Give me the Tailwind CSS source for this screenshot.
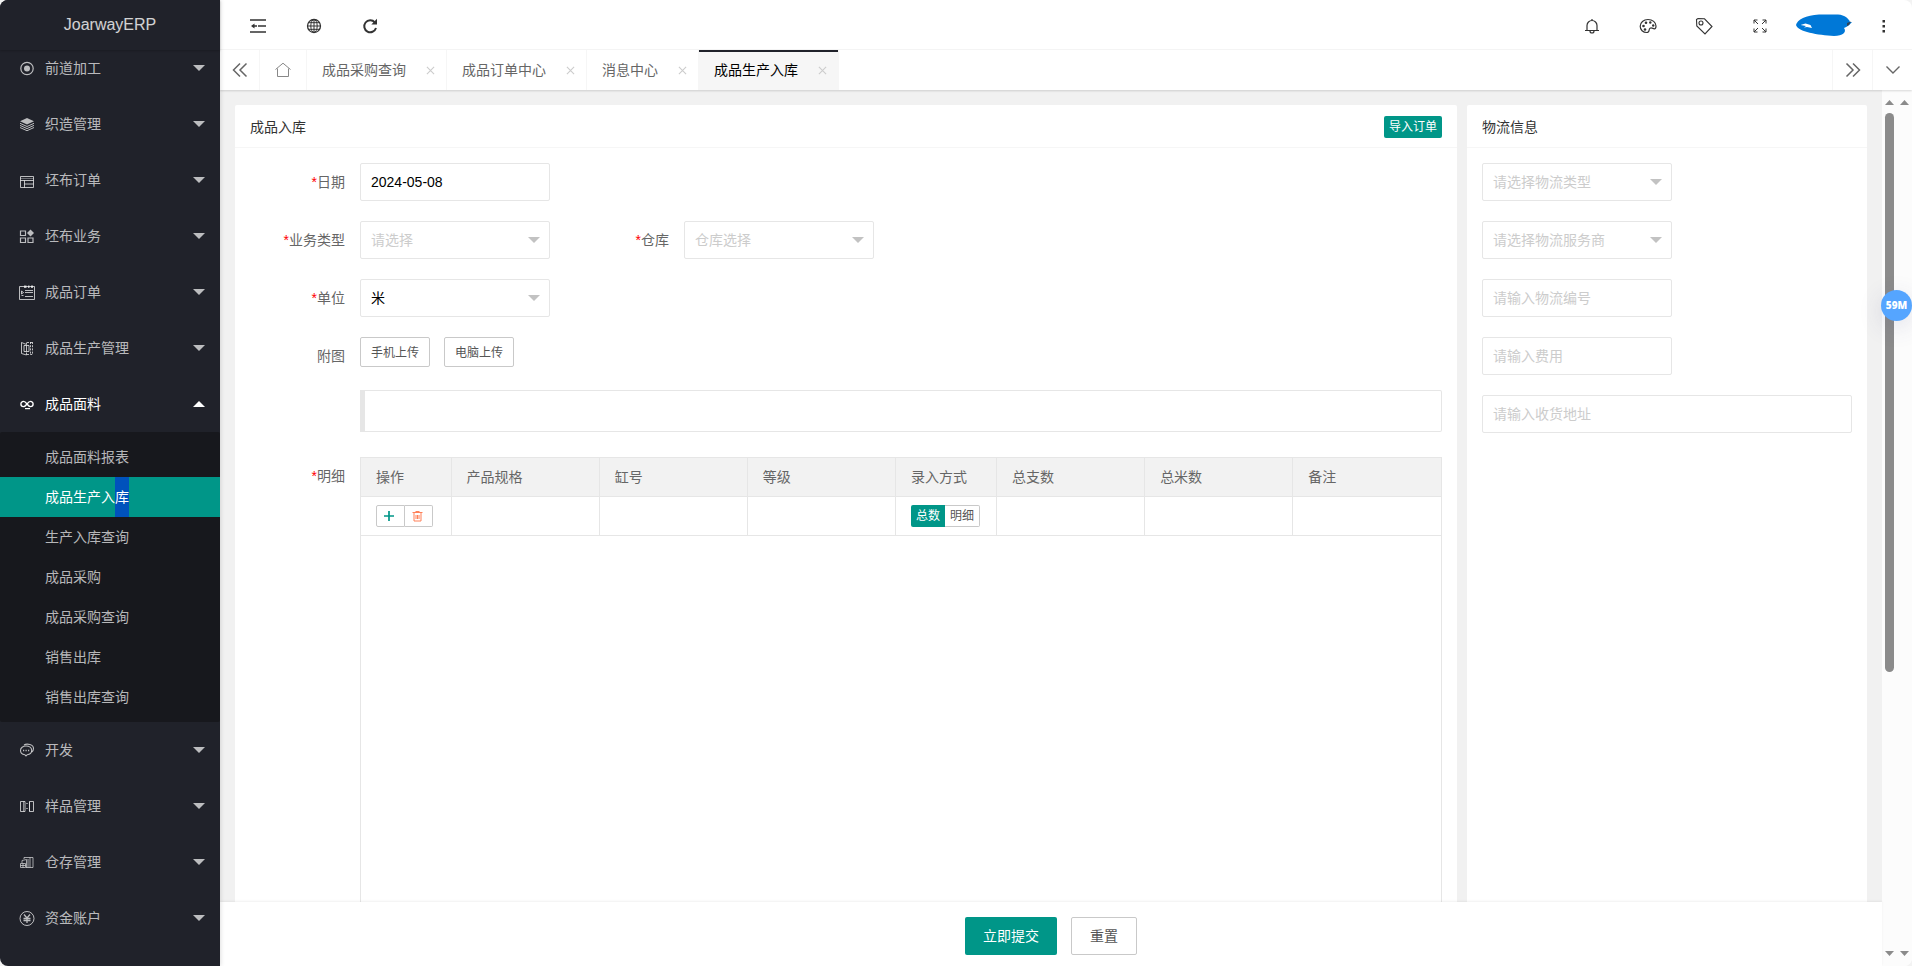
<!DOCTYPE html>
<html lang="zh-CN">
<head>
<meta charset="utf-8">
<meta name="viewport" content="width=device-width, initial-scale=1">
<title>JoarwayERP</title>
<script src="https://cdn.jsdelivr.net/npm/@tailwindcss/browser@4"></script>
</head>
<body class="h-screen overflow-hidden bg-[#f3f3f3] text-sm text-[#666] font-['Liberation_Sans','Noto_Sans_CJK_SC',sans-serif]">
<svg class="hidden" aria-hidden="true">
  <symbol id="down" viewBox="0 0 12 6"><path d="M0 0h12L6 6z" fill="currentColor"/></symbol>
  <symbol id="up" viewBox="0 0 12 6"><path d="M0 6h12L6 0z" fill="currentColor"/></symbol>
  <symbol id="close" viewBox="0 0 10 10"><path d="M1 1l8 8M9 1L1 9" fill="none" stroke="currentColor" stroke-width="1.2"/></symbol>
</svg>
<div class="flex h-full overflow-hidden rounded-lg bg-white">

  <!-- Sidebar -->
  <aside class="relative z-20 flex w-[220px] shrink-0 flex-col bg-[#20222a] text-white/70 shadow-[1px_0_4px_rgba(0,0,0,0.12)]">
    <div class="z-10 flex h-[50px] shrink-0 items-center justify-center bg-[#20222a] text-base text-white/80 shadow-[0_1px_2px_rgba(0,0,0,0.2)]">JoarwayERP</div>
    <nav class="-mt-2.5 min-h-0 flex-1 overflow-hidden">
      <ul>
        <li><a href="#" class="flex h-14 items-center pr-[15px] pl-[19px]">
          <svg class="mr-[10px] size-4" viewBox="0 0 16 16" fill="none" stroke="currentColor" stroke-width="1.2"><circle cx="8" cy="8.5" r="6.2"/><circle cx="8" cy="8.5" r="3" fill="currentColor" stroke="none"/></svg>
          <span class="flex-1">前道加工</span><svg class="h-1.5 w-3"><use href="#down"/></svg></a></li>
        <li><a href="#" class="flex h-14 items-center pr-[15px] pl-[19px]">
          <svg class="mr-[10px] size-4" viewBox="0 0 16 16" fill="none" stroke="currentColor"><path d="M8 2l7 3.2-7 3.2-7-3.2z" fill="currentColor" stroke="none"/><path d="M1 7.300l7 3.200 7-3.200M1 9.400l7 3.200 7-3.200M1 11.500l7 3.200 7-3.200"/></svg>
          <span class="flex-1">织造管理</span><svg class="h-1.5 w-3"><use href="#down"/></svg></a></li>
        <li><a href="#" class="flex h-14 items-center pr-[15px] pl-[19px]">
          <svg class="mr-[10px] size-4" viewBox="0 0 16 16" fill="none" stroke="currentColor"><path d="M1.500 4.500h13v11h-13zM1.500 8.500h13M5.500 8.500v7M5.500 12h9"/><path d="M1.500 6.500h13" opacity=".5"/></svg>
          <span class="flex-1">坯布订单</span><svg class="h-1.5 w-3"><use href="#down"/></svg></a></li>
        <li><a href="#" class="flex h-14 items-center pr-[15px] pl-[19px]">
          <svg class="mr-[10px] size-4" viewBox="0 0 16 16" fill="none" stroke="currentColor" stroke-width="1.2"><path d="M1.500 3h5v4.500h-5zM1.500 10h5v4.500h-5zM9 10h5v4.500H9z"/><path d="M11.500 1.500L15 5l-3.500 3.500L8 5z" fill="currentColor" stroke="none"/></svg>
          <span class="flex-1">坯布业务</span><svg class="h-1.5 w-3"><use href="#down"/></svg></a></li>
        <li><a href="#" class="flex h-14 items-center pr-[15px] pl-[19px]">
          <svg class="mr-[10px] size-4" viewBox="0 0 16 16" fill="none" stroke="currentColor"><path d="M.5 2.500h15v13H.5z"/><path d="M5 1.500h2.500V4H5zM9 1.500h1.500V4H9zM12 1.500h2V4h-2z" fill="currentColor" stroke="none"/><path d="M2.500 7v3l2-1.500zM6 6.500h8M6 8.500h8M2.500 11.500h2M6 12.500h8"/></svg>
          <span class="flex-1">成品订单</span><svg class="h-1.5 w-3"><use href="#down"/></svg></a></li>
        <li><a href="#" class="flex h-14 items-center pr-[15px] pl-[19px]">
          <svg class="mr-[10px] size-4" viewBox="0 0 16 16" fill="none" stroke="currentColor"><path d="M2.500 2.500v11l5 1.500v-2.500M2.500 2.500L7.500 4.500v-2M5 5.500h5v6H5zM7.500 5.500v6"/><path d="M8 2.500h6M8 14.500h6M11.500 2v12M13.500 2v12" stroke-dasharray="2 1.200"/></svg>
          <span class="flex-1">成品生产管理</span><svg class="h-1.5 w-3"><use href="#down"/></svg></a></li>
        <li class="text-white"><a href="#" class="flex h-14 items-center pr-[15px] pl-[19px]">
          <svg class="mr-[10px] size-4" viewBox="0 0 16 16" fill="none" stroke="currentColor" stroke-width="1.400"><path d="M8 8C6.800 6.400 5.900 5.400 4.500 5.400a2.600 2.600 0 0 0 0 5.200C5.900 10.600 6.800 9.600 8 8S10.100 5.400 11.500 5.400a2.600 2.600 0 0 1 0 5.200C10.100 10.600 9.200 9.600 8 8z"/><path d="M6 12.600h5" stroke-width="1.200"/></svg>
          <span class="flex-1">成品面料</span><svg class="h-1.5 w-3"><use href="#up"/></svg></a>
          <ul class="rounded-xs bg-[#17181d] py-[5px] text-white/70">
            <li><a href="#" class="block h-10 pl-[45px] leading-10">成品面料报表</a></li>
            <li><a href="#" class="flex h-10 bg-[#009688] pl-[45px] leading-10 text-white">成品生产入<span class="bg-[#0052bc]">库</span></a></li>
            <li><a href="#" class="block h-10 pl-[45px] leading-10">生产入库查询</a></li>
            <li><a href="#" class="block h-10 pl-[45px] leading-10">成品采购</a></li>
            <li><a href="#" class="block h-10 pl-[45px] leading-10">成品采购查询</a></li>
            <li><a href="#" class="block h-10 pl-[45px] leading-10">销售出库</a></li>
            <li><a href="#" class="block h-10 pl-[45px] leading-10">销售出库查询</a></li>
          </ul></li>
        <li><a href="#" class="flex h-14 items-center pr-[15px] pl-[19px]">
          <svg class="mr-[10px] size-4" viewBox="0 0 16 16" fill="none" stroke="currentColor" stroke-width="1.100"><path d="M7 4c3.200 0 5.700 1.900 5.700 4.400 0 2.200-2 3.900-4.500 4.300L7 14l-1.200-1.300C3.300 12.300 1.500 10.600 1.500 8.400 1.500 5.900 4 4 7 4z"/><path d="M5 3c3-1.800 9.500-.5 9.500 3.500 0 1.800-.7 2.800-1.800 3.500"/><path d="M4 8.500h1.200M6.500 8.500h1.200M9 8.500h1.200" stroke-width="1.500"/></svg>
          <span class="flex-1">开发</span><svg class="h-1.5 w-3"><use href="#down"/></svg></a></li>
        <li><a href="#" class="flex h-14 items-center pr-[15px] pl-[19px]">
          <svg class="mr-[10px] size-4" viewBox="0 0 16 16" fill="none" stroke="currentColor"><path d="M1.500 3.500H6v10H1.500zM10.500 3.500h4v10h-4z"/><path d="M4.500 3.500v10M10.500 3.500v10M7 5.500h2M7 10.500h2" opacity=".7"/></svg>
          <span class="flex-1">样品管理</span><svg class="h-1.5 w-3"><use href="#down"/></svg></a></li>
        <li><a href="#" class="flex h-14 items-center pr-[15px] pl-[19px]">
          <svg class="mr-[10px] size-4" viewBox="0 0 16 16" fill="none" stroke="currentColor" opacity=".85"><path d="M1.500 9.500h5v4h-5zM3 9V6.500l4.500-1v8M5 5V3.500h6v10M11 3.500h3v10h-7M1.500 11.500h5M4 9.500v4M9 5v8.500"/></svg>
          <span class="flex-1">仓存管理</span><svg class="h-1.5 w-3"><use href="#down"/></svg></a></li>
        <li><a href="#" class="flex h-14 items-center pr-[15px] pl-[19px]">
          <svg class="mr-[10px] size-4" viewBox="0 0 16 16" fill="none" stroke="currentColor"><circle cx="8" cy="8.500" r="7"/><path d="M5 4.500l3 3.500 3-3.500M8 8v5M4.500 8.500h7M4.500 10.500h7" stroke-width="1.300"/></svg>
          <span class="flex-1">资金账户</span><svg class="h-1.5 w-3"><use href="#down"/></svg></a></li>
      </ul>
    </nav>
  </aside>

  <div class="flex min-w-0 flex-1 flex-col">
    <!-- Top bar -->
    <header class="flex h-[50px] shrink-0 items-center justify-between border-b border-[#f6f6f6] pt-0.5 pr-5 pl-2.5 text-[#333]">
      <div class="flex">
        <button aria-label="收起菜单" class="flex h-12 w-14 items-center justify-center"><svg class="size-4" viewBox="0 0 16 16"><path d="M0 2h16M8 8h8M0 14h16M4 8h3" fill="none" stroke="currentColor" stroke-width="1.600"/><path d="M1 8l3.500-2.500v5z" fill="currentColor"/></svg></button>
        <button aria-label="前台" class="flex h-12 w-14 items-center justify-center"><svg class="size-4" viewBox="0 0 16 16" fill="none" stroke="currentColor"><circle cx="8" cy="8" r="6.500" stroke-width="1.300"/><ellipse cx="8" cy="8" rx="3.200" ry="6.500"/><path d="M8 1.500v13M1.500 8h13M2.500 4.700h11M2.500 11.300h11"/></svg></button>
        <button aria-label="刷新" class="flex h-12 w-14 items-center justify-center"><svg class="size-4" viewBox="0 0 16 16"><path d="M12.800 4.300A6 6 0 1 0 14 10" fill="none" stroke="currentColor" stroke-width="2"/><path d="M15 .8v5.700H9.300z" fill="currentColor"/></svg></button>
      </div>
      <div class="flex items-center">
        <button aria-label="消息" class="flex h-12 w-14 items-center justify-center"><svg class="size-4" viewBox="0 0 16 16" fill="none" stroke="currentColor" stroke-width="1.200"><path d="M1 12.500h14M3 12.500V7.500a5 5 0 0 1 10 0v5M6 13a2 2 0 0 0 4 0M8 1v1.500"/></svg></button>
        <button aria-label="主题" class="flex h-12 w-14 items-center justify-center"><svg class="h-4 w-[18px]" viewBox="0 0 18 16" fill="none" stroke="currentColor" stroke-width="1.200"><path d="M9 1.500c4.500 0 8 2.800 8 6.500 0 1.800-.6 3-1.800 2.800-1.300-.2-2.700-1.400-4.200-.6-1.800 1 .3 4.300-3.200 4.300C4 14.500 1.200 11.800 1.200 8.200 1.200 4.400 4.600 1.500 9 1.500z"/><g fill="currentColor" stroke="none"><circle cx="7" cy="4.800" r="1.300"/><circle cx="11.300" cy="4.500" r="1.200"/><circle cx="14.200" cy="7.500" r="1.200"/><circle cx="4.500" cy="8" r="1.300"/><circle cx="6" cy="11.500" r="1.300"/></g></svg></button>
        <button aria-label="便签" class="flex h-12 w-14 items-center justify-center"><svg class="size-[18px]" viewBox="0 0 18 18" fill="none" stroke="currentColor" stroke-width="1.100"><path d="M1.500 2.500L3 1.500l6.500.3 7.500 7.700-7 7.500L1.800 9z"/><circle cx="6" cy="6" r="2"/></svg></button>
        <button aria-label="全屏" class="flex h-12 w-14 items-center justify-center"><svg class="size-[14px]" viewBox="0 0 14 14" fill="none" stroke="currentColor"><path d="M1 4.500V1h3.500M1 1l4 4M9.500 1H13v3.500M13 1L9 5M1 9.500V13h3.500M1 13l4-4M9.500 13H13V9.500M13 13L9 9"/></svg></button>
        <button aria-label="用户" class="flex h-12 w-[88px] items-center justify-center pr-4"><svg class="h-[23px] w-14" viewBox="0 0 56 23"><path d="M0 11C1 6 10 1 23 .5L42 .5C49 1 53 5 54 8L56 8C54 10 53 12 48 14C51 18 47 22 38 22C22 21 2 18 0 11z" fill="#0078d7"/><path d="M4.500 11l5-1.500 5 1.500 1.500 3-5-1-3 .5 2-1.500z" fill="#fff"/><path d="M51 9l4-1.500-2 3.500-2 1z" fill="#345"/></svg></button>
        <button aria-label="更多" class="flex h-12 w-4 items-center justify-center"><svg class="h-3.5 w-1" viewBox="0 0 4 14" fill="currentColor"><path d="M.5 1h2.500v2.500H.5zM.5 6h2.500v2.500H.5zM.5 11h2.500v2.500H.5z"/></svg></button>
      </div>
    </header>

    <!-- Page tabs -->
    <div class="relative z-10 flex h-10 shrink-0 bg-white shadow-[0_1px_2px_rgba(0,0,0,0.15)]">
      <button aria-label="向左" class="flex w-10 items-center justify-center border-r border-[#f6f6f6]"><svg class="size-4" viewBox="0 0 16 16" fill="none" stroke="currentColor" stroke-width="1.500"><path d="M8 1.500L1.500 8 8 14.500M14.500 1.500L8 8l6.500 6.500"/></svg></button>
      <a href="#" aria-label="主页" class="flex w-[47px] items-center justify-center border-r border-[#f6f6f6] text-[#888]"><svg class="size-4" viewBox="0 0 16 16" fill="none" stroke="currentColor"><path d="M.5 7.500L8 1.200l7.500 6.300M2.500 6.500v8h11v-8"/></svg></a>
      <div class="flex items-center border-r border-[#f6f6f6] pr-[11px] pl-[15px]"><a href="#">成品采购查询</a><button aria-label="关闭" class="ml-5 flex size-[9px] text-[#ccc]"><svg class="size-full"><use href="#close"/></svg></button></div>
      <div class="flex items-center border-r border-[#f6f6f6] pr-[11px] pl-[15px]"><a href="#">成品订单中心</a><button aria-label="关闭" class="ml-5 flex size-[9px] text-[#ccc]"><svg class="size-full"><use href="#close"/></svg></button></div>
      <div class="flex items-center border-r border-[#f6f6f6] pr-[11px] pl-[15px]"><a href="#">消息中心</a><button aria-label="关闭" class="ml-5 flex size-[9px] text-[#ccc]"><svg class="size-full"><use href="#close"/></svg></button></div>
      <div class="relative flex items-center border-r border-[#f6f6f6] bg-[#f6f6f6] pr-[11px] pl-[15px] text-black"><span class="absolute inset-x-0 top-0 h-0.5 bg-[#20222a]"></span><a href="#">成品生产入库</a><button aria-label="关闭" class="ml-5 flex size-[9px] text-[#ccc]"><svg class="size-full"><use href="#close"/></svg></button></div>
      <div class="flex-1"></div>
      <button aria-label="向右" class="flex w-10 items-center justify-center border-l border-[#f6f6f6]"><svg class="size-4" viewBox="0 0 16 16" fill="none" stroke="currentColor" stroke-width="1.500"><path d="M1.500 1.500L8 8l-6.500 6.500M8 1.500L14.500 8 8 14.500"/></svg></button>
      <button aria-label="展开" class="flex w-10 items-center justify-center border-l border-[#f6f6f6]"><svg class="h-2 w-4" viewBox="0 0 16 8" fill="none" stroke="currentColor" stroke-width="1.400"><path d="M1.500.5L8 7l6.500-6.500"/></svg></button>
    </div>

    <div class="relative flex min-h-0 flex-1">
      <div class="flex min-w-0 flex-1 flex-col bg-[#f1f1f1]">
        <main class="flex min-h-0 flex-1 gap-2.5 overflow-hidden px-[15px] pt-[15px]">

          <!-- Stock-in form -->
          <section class="flex min-w-0 flex-1 flex-col rounded-t-xs bg-white">
            <div class="flex h-[43px] shrink-0 items-center justify-between border-b border-[#f6f6f6] px-[15px] pt-0.5">
              <h2 class="text-[#333]">成品入库</h2>
              <button class="h-[22px] rounded-xs bg-[#009688] px-[5px] text-xs text-white">导入订单</button>
            </div>
            <form class="flex min-h-0 flex-1 flex-col p-[15px] pb-0">
              <div class="mb-5 flex items-center">
                <label for="date" class="w-[110px] pr-[15px] text-right"><span class="text-[#f00]">*</span>日期</label>
                <input id="date" type="text" value="2024-05-08" class="h-[38px] w-[190px] rounded-xs border border-[#e6e6e6] px-2.5 text-black">
              </div>
              <div class="mb-5 flex items-center">
                <label for="biz" class="w-[110px] pr-[15px] text-right"><span class="text-[#f00]">*</span>业务类型</label>
                <div class="relative w-[190px]"><select id="biz" class="block h-[38px] w-full appearance-none rounded-xs border border-[#e6e6e6] px-2.5 text-[#ccc]"><option>请选择</option></select><svg class="pointer-events-none absolute top-4 right-2.5 h-1.5 w-3 text-[#c2c2c2]"><use href="#down"/></svg></div>
                <label for="store" class="ml-6 w-[110px] pr-[15px] text-right"><span class="text-[#f00]">*</span>仓库</label>
                <div class="relative w-[190px]"><select id="store" class="block h-[38px] w-full appearance-none rounded-xs border border-[#e6e6e6] px-2.5 text-[#ccc]"><option>仓库选择</option></select><svg class="pointer-events-none absolute top-4 right-2.5 h-1.5 w-3 text-[#c2c2c2]"><use href="#down"/></svg></div>
              </div>
              <div class="mb-5 flex items-center">
                <label for="unit" class="w-[110px] pr-[15px] text-right"><span class="text-[#f00]">*</span>单位</label>
                <div class="relative w-[190px]"><select id="unit" class="block h-[38px] w-full appearance-none rounded-xs border border-[#e6e6e6] px-2.5 text-black"><option>米</option></select><svg class="pointer-events-none absolute top-4 right-2.5 h-1.5 w-3 text-[#c2c2c2]"><use href="#down"/></svg></div>
              </div>
              <div class="mb-[15px] flex">
                <span class="w-[110px] pr-[15px] text-right leading-[38px]">附图</span>
                <button type="button" class="h-[30px] rounded-xs border border-[#c9c9c9] px-2.5 pt-0.5 text-xs text-[#555]">手机上传</button>
                <button type="button" class="ml-3.5 h-[30px] rounded-xs border border-[#c9c9c9] px-2.5 pt-0.5 text-xs text-[#555]">电脑上传</button>
              </div>
              <div class="mb-[25px] ml-[110px] h-[42px] shrink-0 rounded-r-xs border border-l-[5px] border-[#e6e6e6]"></div>
              <div class="flex min-h-0 flex-1">
                <span class="w-[110px] shrink-0 pr-[15px] text-right leading-[38px]"><span class="text-[#f00]">*</span>明细</span>
                <div class="min-w-0 flex-1 border-x border-t border-[#e6e6e6]">
                  <table class="w-full table-fixed border-collapse text-left">
                    <colgroup><col class="w-[90px]"><col><col><col><col class="w-[101px]"><col><col><col></colgroup>
                    <thead class="bg-[#f2f2f2]">
                      <tr class="h-[38px] border-b border-[#e6e6e6]">
                        <th class="border-r border-[#e6e6e6] px-[15px] font-normal">操作</th>
                        <th class="border-r border-[#e6e6e6] px-[15px] font-normal">产品规格</th>
                        <th class="border-r border-[#e6e6e6] px-[15px] font-normal">缸号</th>
                        <th class="border-r border-[#e6e6e6] px-[15px] font-normal">等级</th>
                        <th class="border-r border-[#e6e6e6] px-[15px] font-normal">录入方式</th>
                        <th class="border-r border-[#e6e6e6] px-[15px] font-normal">总支数</th>
                        <th class="border-r border-[#e6e6e6] px-[15px] font-normal">总米数</th>
                        <th class="px-[15px] font-normal">备注</th>
                      </tr>
                    </thead>
                    <tbody>
                      <tr class="h-[39px] border-b border-[#e6e6e6]">
                        <td class="border-r border-[#e6e6e6] pl-[15px]"><div class="flex">
                          <button type="button" aria-label="添加" class="flex h-[22px] w-[29px] items-center rounded-l-xs border border-[#c9c9c9] pl-1.5 text-[#009688]"><svg class="size-3" viewBox="0 0 12 12"><path d="M6 1v10M1 6h10" stroke="currentColor" stroke-width="1.700"/></svg></button>
                          <button type="button" aria-label="删除" class="flex h-[22px] w-7 items-center rounded-r-xs border border-l-0 border-[#c9c9c9] pl-[7px] text-[#ff5722]"><svg class="size-3" viewBox="0 0 12 12" fill="none" stroke="currentColor" opacity=".75"><path d="M.5 2.500h10M3.500 1.500h4M2 3v8h7V3M4 5v4M5.500 5v4M7 5v4"/></svg></button>
                        </div></td>
                        <td class="border-r border-[#e6e6e6]"></td><td class="border-r border-[#e6e6e6]"></td><td class="border-r border-[#e6e6e6]"></td>
                        <td class="border-r border-[#e6e6e6] pl-[15px]"><div class="flex text-xs">
                          <button type="button" class="h-[22px] w-[34px] rounded-l-xs bg-[#009688] text-white">总数</button>
                          <button type="button" class="h-[22px] w-[35px] rounded-r-xs border border-l-0 border-[#c9c9c9] text-[#555]">明细</button>
                        </div></td>
                        <td class="border-r border-[#e6e6e6]"></td><td class="border-r border-[#e6e6e6]"></td><td></td>
                      </tr>
                    </tbody>
                  </table>
                </div>
              </div>
            </form>
          </section>

          <!-- Logistics -->
          <section class="w-[400px] shrink-0 rounded-t-xs bg-white">
            <h2 class="flex h-[43px] items-center border-b border-[#f6f6f6] px-[15px] pt-0.5 text-[#333]">物流信息</h2>
            <form class="flex flex-col gap-5 p-[15px]">
              <div class="relative w-[190px]"><select aria-label="物流类型" class="block h-[38px] w-full appearance-none rounded-xs border border-[#e6e6e6] px-2.5 text-[#ccc]"><option>请选择物流类型</option></select><svg class="pointer-events-none absolute top-4 right-2.5 h-1.5 w-3 text-[#c2c2c2]"><use href="#down"/></svg></div>
              <div class="relative w-[190px]"><select aria-label="物流服务商" class="block h-[38px] w-full appearance-none rounded-xs border border-[#e6e6e6] px-2.5 text-[#ccc]"><option>请选择物流服务商</option></select><svg class="pointer-events-none absolute top-4 right-2.5 h-1.5 w-3 text-[#c2c2c2]"><use href="#down"/></svg></div>
              <input type="text" aria-label="物流编号" placeholder="请输入物流编号" class="h-[38px] w-[190px] rounded-xs border border-[#e6e6e6] px-2.5 placeholder:text-[#ccc]">
              <input type="text" aria-label="费用" placeholder="请输入费用" class="h-[38px] w-[190px] rounded-xs border border-[#e6e6e6] px-2.5 placeholder:text-[#ccc]">
              <input type="text" aria-label="收货地址" placeholder="请输入收货地址" class="h-[38px] w-full rounded-xs border border-[#e6e6e6] px-2.5 placeholder:text-[#ccc]">
            </form>
          </section>
        </main>

        <footer class="z-10 flex h-16 shrink-0 items-center justify-center gap-3.5 bg-white pt-1 shadow-[0_-1px_2px_rgba(0,0,0,0.06)]">
          <button class="h-[38px] rounded-xs bg-[#009688] px-[18px] text-white">立即提交</button>
          <button class="h-[38px] rounded-xs border border-[#c9c9c9] px-[18px] text-[#555]">重置</button>
        </footer>
      </div>

      <!-- Scroll tracks -->
      <div class="flex w-[30px] shrink-0 bg-[#fcfcfc] text-[#8b8b8b]">
        <div class="flex w-[15px] flex-col items-center py-2.5">
          <svg class="h-[5px] w-[9px]" viewBox="0 0 12 6" preserveAspectRatio="none"><path d="M0 6h12L6 0z" fill="currentColor"/></svg>
          <div class="mt-2 flex w-full flex-1 justify-center"><div class="h-2/3 w-[9px] rounded-full bg-[#8b8b8b]"></div></div>
          <svg class="h-[5px] w-[9px]" viewBox="0 0 12 6" preserveAspectRatio="none"><path d="M0 0h12L6 6z" fill="currentColor"/></svg>
        </div>
        <div class="flex w-[15px] flex-col items-center justify-between py-2.5">
          <svg class="h-[5px] w-[9px]" viewBox="0 0 12 6" preserveAspectRatio="none"><path d="M0 6h12L6 0z" fill="currentColor"/></svg>
          <svg class="h-[5px] w-[9px]" viewBox="0 0 12 6" preserveAspectRatio="none"><path d="M0 0h12L6 6z" fill="currentColor"/></svg>
        </div>
      </div>
      <div class="absolute top-[200px] right-0 z-20 flex size-[31px] items-center justify-center rounded-full bg-[#55a5ff] font-['Open_Sans',sans-serif] text-[10px] font-extrabold text-white shadow-[0_6px_24px_rgba(60,60,120,0.15)]">59M</div>
    </div>
  </div>
</div>
</body>
</html>
